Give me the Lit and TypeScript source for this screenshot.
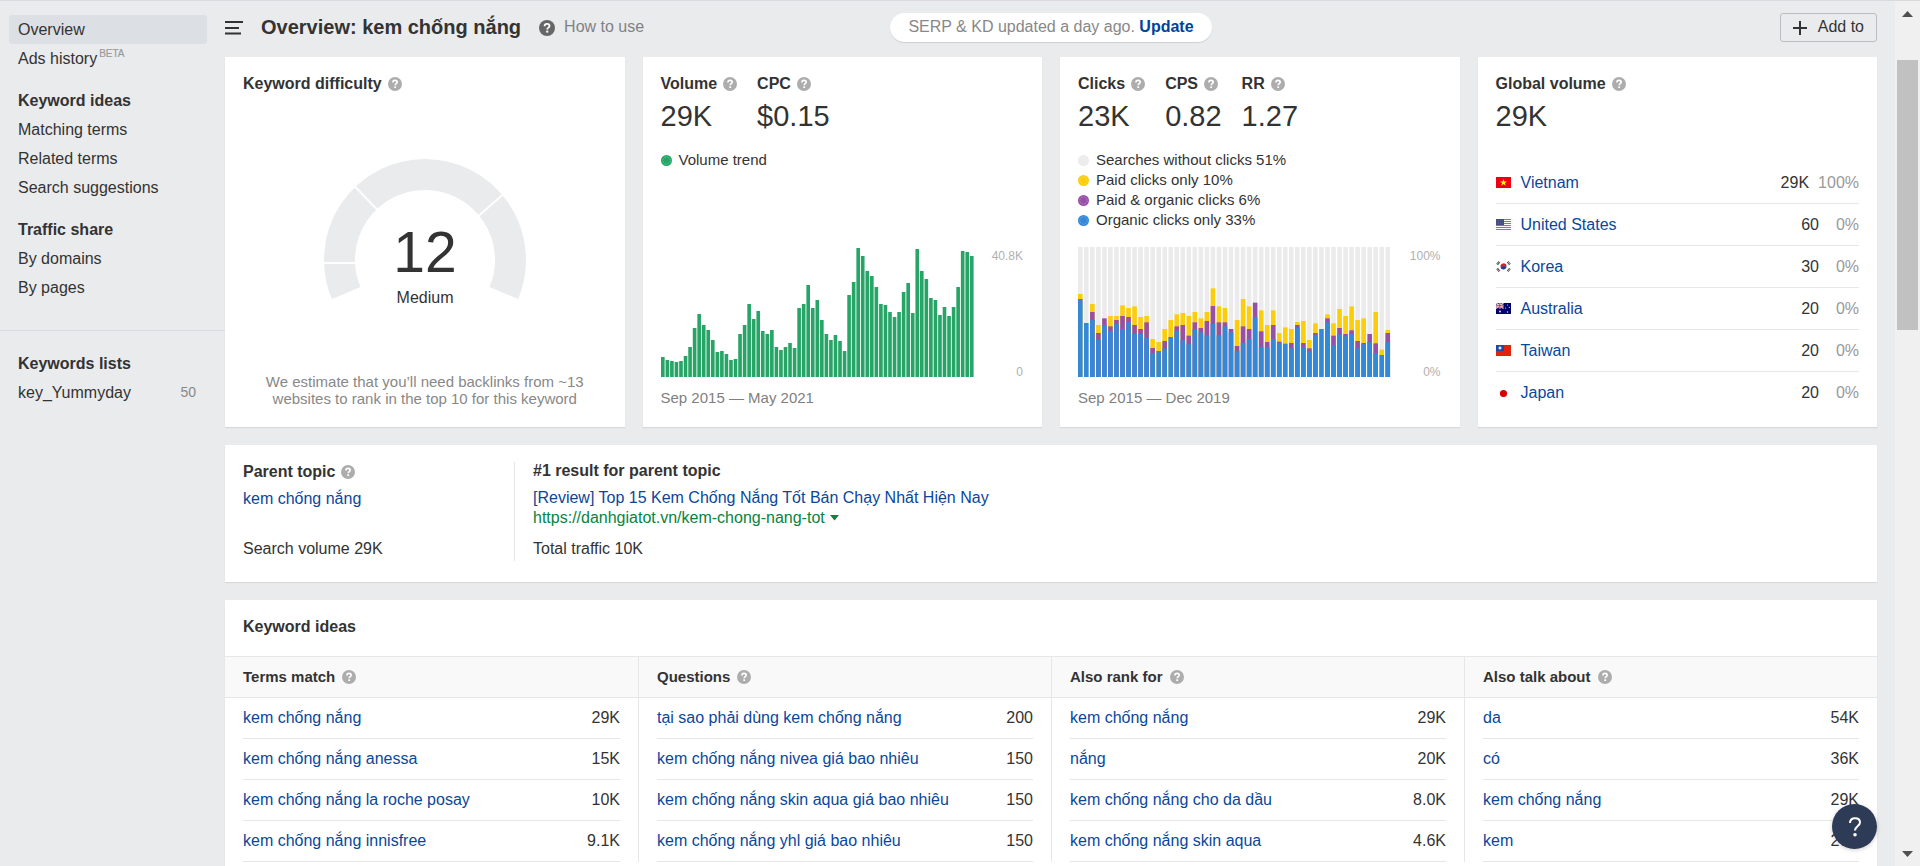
import { LitElement, html, svg, css, nothing } from "lit";
import { customElement, property } from "lit/decorators.js";

type Row = [string, string];

const VOLUME_TREND = [
  20, 17, 16, 15, 16, 21, 30, 49, 63, 52, 47, 37, 25, 26, 23, 17, 18, 43, 52, 73, 58, 66, 46, 43, 47, 30, 27, 30, 34, 29,
  69, 73, 92, 69, 77, 57, 43, 37, 42, 36, 26, 82, 95, 129, 121, 106, 101, 90, 73, 72, 65, 60, 65, 85, 94, 64, 128, 106,
  98, 79, 77, 62, 70, 61, 70, 90, 126, 125, 121,
];
const VOLUME_MAX = 130;

// Cumulative levels per month, out of 390: organic, + paid & organic, + paid.
const CLICK_LEVELS = [
  [234, 234, 249], [162, 162, 162], [171, 195, 219], [111, 132, 156], [156, 176, 176], [137, 152, 183],
  [159, 171, 183], [144, 183, 215], [164, 180, 207], [129, 156, 212], [129, 144, 180], [117, 164, 183],
  [71, 87, 114], [78, 78, 105], [86, 108, 144], [120, 120, 171], [138, 152, 188], [110, 156, 192],
  [98, 124, 183], [144, 164, 195], [134, 147, 176], [125, 168, 195], [159, 213, 266], [125, 164, 212],
  [152, 164, 207], [134, 144, 144], [78, 93, 171], [102, 152, 234], [114, 144, 212], [179, 223, 223],
  [90, 137, 200], [89, 105, 156], [114, 156, 200], [102, 106, 132], [100, 100, 149], [86, 102, 144],
  [147, 156, 165], [89, 102, 168], [78, 86, 111], [125, 132, 161], [144, 144, 144], [164, 176, 188],
  [95, 124, 161], [129, 147, 204], [122, 129, 183], [129, 140, 212], [86, 108, 171], [98, 102, 176],
  [105, 129, 129], [71, 101, 195], [66, 66, 82], [105, 132, 141],
];
const CLICK_MAX = 390;

const COUNTRIES: [string, string, string, string][] = [
  ["vn", "Vietnam", "29K", "100%"],
  ["us", "United States", "60", "0%"],
  ["kr", "Korea", "30", "0%"],
  ["au", "Australia", "20", "0%"],
  ["tw", "Taiwan", "20", "0%"],
  ["jp", "Japan", "20", "0%"],
];

const IDEAS: { title: string; rows: Row[] }[] = [
  { title: "Terms match", rows: [["kem chống nắng", "29K"], ["kem chống nắng anessa", "15K"], ["kem chống nắng la roche posay", "10K"], ["kem chống nắng innisfree", "9.1K"]] },
  { title: "Questions", rows: [["tại sao phải dùng kem chống nắng", "200"], ["kem chống nắng nivea giá bao nhiêu", "150"], ["kem chống nắng skin aqua giá bao nhiêu", "150"], ["kem chống nắng yhl giá bao nhiêu", "150"]] },
  { title: "Also rank for", rows: [["kem chống nắng", "29K"], ["nắng", "20K"], ["kem chống nắng cho da dầu", "8.0K"], ["kem chống nắng skin aqua", "4.6K"]] },
  { title: "Also talk about", rows: [["da", "54K"], ["có", "36K"], ["kem chống nắng", "29K"], ["kem", "27K"]] },
];

const FLAGS: Record<string, unknown> = {
  vn: svg`<rect width="15" height="11" fill="#ec0015"/><path fill="#ff0" d="M7.5 2l.85 2.5H11L8.9 6.1l.8 2.6-2.2-1.6-2.2 1.6.8-2.6L4 4.500h2.650z"/>`,
  us: svg`<rect width="15" height="11" fill="#fff"/><path stroke="#c8606c" stroke-width="1" d="M0 .5h15M0 2.500h15M0 4.500h15M0 6.500h15M0 8.500h15M0 10.500h15"/><rect width="8" height="6" fill="#3c4a7c"/><path stroke="#8d96b8" stroke-width=".6" stroke-dasharray=".7 1" d="M.7 1.200h7M.7 3h7M.7 4.800h7"/>`,
  kr: svg`<rect width="15" height="11" fill="#fff"/><path fill="#d3202f" d="M4.500 5.700a3 3 0 0 1 6 -.6L7.500 6z"/><path fill="#1d3f8f" d="M4.500 5.700a3 3 0 0 0 6 -.6L7.500 5.500z"/><path stroke="#444" stroke-width="2.400" stroke-dasharray=".9 .4" d="M1.200 3.500l2.200-2.600M11.600 .9l2.200 2.600M1.200 7.500l2.200 2.600M11.600 10.100l2.200-2.600"/>`,
  au: svg`<rect width="15" height="11" fill="#00006c"/><path stroke="#e8b6c0" stroke-width="1.500" d="M0 0l7.500 5.500M7.500 0L0 5.500"/><path stroke="#fff" stroke-width="1.800" d="M3.750 0v5.500M0 2.750h7.500"/><path stroke="#d8203a" stroke-width="1" d="M3.750 0v5.500M0 2.750h7.500"/><g fill="#dfe0f0"><circle cx="4" cy="8.500" r="1"/><circle cx="11.500" cy="2" r=".6"/><circle cx="9.500" cy="5" r=".6"/><circle cx="13.300" cy="4.300" r=".6"/><circle cx="11.500" cy="9" r=".7"/></g>`,
  tw: svg`<rect width="15" height="11" fill="#e0230f"/><rect width="8" height="6" fill="#1c4aa8"/><circle cx="4" cy="3" r="1.700" fill="#8fb0e0"/><circle cx="4" cy="3" r="1" fill="#fff"/>`,
  jp: svg`<rect width="15" height="11" fill="#fff"/><circle cx="7.500" cy="5.500" r="3.600" fill="#d80000"/>`,
};

@customElement("help-hint")
class HelpHint extends LitElement {
  @property() label = "";
  static styles = css`
    :host { display: inline-flex; flex: none; }
    button { display: flex; width: var(--hint-size, 14px); height: var(--hint-size, 14px); padding: 0; border: 0; background: none; color: inherit; cursor: pointer; }
    svg { width: 100%; height: 100%; }
  `;
  render() {
    return html`<button aria-label="Help: ${this.label}">
      <svg viewBox="0 0 14 14" aria-hidden="true">
        <circle cx="7" cy="7" r="7" fill="currentColor"/>
        <path d="M4.900 5.500C4.900 4.100 5.800 3.400 7 3.400s2.200.8 2.200 1.900C9.200 6.700 7.200 6.700 7.200 8.300" fill="none" stroke="#fff" stroke-width="1.600"/>
        <rect x="6.300" y="9.300" width="1.800" height="1.700" fill="#fff"/>
      </svg>
    </button>`;
  }
}

@customElement("app-root")
class AppRoot extends LitElement {
  static styles = css`
    :host {
      display: flex;
      box-sizing: border-box;
      height: 100vh;
      overflow: hidden;
      border-top: 1px solid #d9dadd;
      background: #eaebed;
      color: #333;
      font: 16px/20px "Liberation Sans", Arial, sans-serif;
    }
    * { box-sizing: border-box; }
    a { color: #0a479b; text-decoration: none; }
    h1, h2, h3, p, ul { margin: 0; padding: 0; }
    ul { list-style: none; }
    button { font: inherit; color: inherit; }
    svg { display: block; }
    table { width: 100%; border-collapse: separate; border-spacing: 0; }
    td, th { padding: 0; font-weight: 400; text-align: left; }

    .sidebar { flex: none; width: 225px; padding-top: 14px; line-height: 29px; }
    .sidebar a { color: #333; }
    .group { padding: 0 18px 0 9px; margin-bottom: 13px; }
    .group h2 { padding: 0 9px; font-size: 16px; line-height: 29px; }
    .item { display: flex; justify-content: space-between; padding: 0 9px; border-radius: 3px; }
    .item.active { background: #dcdfe4; }
    .beta { margin-left: 2px; font-size: 10px; line-height: 10px; color: #9b9b9b; -webkit-text-stroke: 0.2px; vertical-align: 7px; }
    .count { padding-right: 2px; font-size: 14px; color: #888; }
    .lists { margin-top: 28px; padding-top: 18px; border-top: 1px solid #d9dce0; }

    .main { flex: 1; min-width: 0; padding-right: 18px; }
    .header { display: grid; grid-template-columns: 1fr auto 1fr; align-items: center; height: 56px; padding-bottom: 3px; }
    .title-row { display: flex; align-items: center; }
    .menu { padding: 0; border: 0; background: none; margin-right: 18px; }
    h1 { padding-bottom: 2px; font-size: 20px; line-height: 26px; }
    .howto { display: flex; align-items: center; gap: 9px; margin-left: 18px; --hint-size: 16px; }
    .howto a { padding-bottom: 2px; color: #808285; }
    .howto help-hint { color: #666; }
    .pill { padding: 0 18px 2px; border-radius: 15px; background: #fff; box-shadow: 0 1px 1px rgba(0, 0, 0, 0.12); line-height: 27px; color: #888; }
    .pill button { padding: 0; border: 0; background: none; font-weight: 700; color: #00439b; }
    .add { justify-self: end; display: flex; align-items: center; gap: 11px; height: 29px; padding: 0 12px; border: 1px solid #bbbdc0; border-radius: 3px; background: none; }
    .add span { padding-bottom: 2px; }

    .cards { display: grid; grid-template-columns: repeat(4, minmax(0, 1fr)); gap: 18px; }
    .panel { background: #fff; box-shadow: 0 1px 1px rgba(0, 0, 0, 0.08); }
    .card { display: flex; flex-direction: column; padding: 18px 18px 20px; }
    .card.geo { padding-bottom: 13px; }
    .metrics { display: flex; gap: 20px; }
    .label { display: flex; align-items: center; gap: 6px; font-size: 16px; line-height: 18px; font-weight: 700; white-space: nowrap; }
    help-hint { color: #adadad; }
    .big { margin-top: 6px; font-size: 29px; line-height: 35px; }

    .gauge { align-self: center; margin: auto 0; width: 202px; overflow: visible; }
    .gauge text { fill: #333; text-anchor: middle; }
    .score { font-size: 57px; }
    .grade { font-size: 16px; }
    .estimate { max-width: 330px; margin: 0 auto; text-align: center; font-size: 15px; line-height: 17px; color: #888; }

    .legend { margin-top: 16px; font-size: 15px; }
    .legend li { display: flex; align-items: center; gap: 7px; }
    .plot { display: flex; justify-content: space-between; margin-top: auto; }
    .bars { flex: 1; min-width: 0; height: 130px; }
    .axis { display: flex; flex-direction: column; justify-content: space-between; width: 50px; margin-bottom: -2px; padding: 2px 1px 0 0; text-align: right; font-size: 12px; line-height: 14px; color: #b0b0b0; }
    .dates { margin-top: 12px; font-size: 15px; line-height: 18px; color: #808080; }

    .countries { margin-top: 28px; }
    .countries td, .countries th { height: 42px; border-bottom: 1px solid #e6e7e9; }
    .countries tr:last-child > * { border-bottom: 0; }
    .country { display: flex; align-items: center; gap: 10px; }
    .figures { display: flex; justify-content: flex-end; gap: 9px; }
    .share { min-width: 31px; text-align: right; color: #999; }

    .parent { display: flex; margin-top: 18px; padding: 17px 18px 21px; }
    .topic { display: flex; flex-direction: column; width: 272px; border-right: 1px solid #e6e7e9; }
    .topic .label { margin-bottom: 8px; margin-top: 1px; }
    .result { display: flex; flex-direction: column; padding-left: 18px; }
    .result h2 { font-size: 16px; line-height: 18px; margin-bottom: 8px; }
    .total { margin-top: auto; padding-bottom: 2px; }
    .url { display: flex; align-items: center; gap: 5px; margin-bottom: 11px; color: #078440; }

    .ideas { margin-top: 18px; padding-bottom: 18px; }
    .ideas > h2 { padding: 17px 18px 19px; font-size: 16px; line-height: 20px; border-bottom: 1px solid #e6e7e9; }
    .columns { display: grid; grid-template-columns: repeat(4, minmax(0, 1fr)); }
    .column + .column { border-left: 1px solid #e6e7e9; }
    .column h3 { display: flex; align-items: center; gap: 7px; height: 41px; padding: 0 18px; background: #f9f9f9; border-bottom: 1px solid #e6e7e9; font-size: 15px; }
    .body { padding: 0 18px; }
    .body td, .body th { height: 41px; border-bottom: 1px solid #e6e7e9; }
    .body td { text-align: right; }

    .support { position: fixed; right: 43px; bottom: 17px; display: grid; place-items: center; width: 45px; height: 45px; padding: 0; border: 0; border-radius: 50%; background: #2e3b56; color: #fff; box-shadow: 0 1px 4px rgba(0, 0, 0, 0.2); }

    .scrollbar { flex: none; display: flex; flex-direction: column; align-items: center; width: 25px; padding: 10px 0 9px; background: #f0f0f0; }
    .track { flex: 1; align-self: stretch; display: flex; flex-direction: column; padding: 0 2px; }
    .before { flex: 43; }
    .thumb { flex: 270; background: #c1c1c1; }
    .after { flex: 520; }
  `;

  private label(text: string) {
    return html`<span class="label">${text}<help-hint label=${text}></help-hint></span>`;
  }

  private metric(name: string, value: string) {
    return html`<div>${this.label(name)}<p class="big">${value}</p></div>`;
  }

  private legend(items: [string, string][]) {
    return html`<ul class="legend">
      ${items.map(
        ([color, text]) => html`<li>
          <svg width="11" height="11" viewBox="0 0 11 11" aria-hidden="true">
            <circle cx="5.500" cy="5.500" r="5.500" fill=${color}/>
            <circle cx="5.500" cy="5.500" r="3.700" fill="none" stroke="#fff" stroke-opacity=".35" stroke-width=".7" stroke-dasharray="1.900 1"/>
          </svg>
          <span>${text}</span>
        </li>`
      )}
    </ul>`;
  }

  private volumeBars() {
    const n = VOLUME_TREND.length;
    return html`<svg class="bars" viewBox="0 0 ${n} ${VOLUME_MAX}" preserveAspectRatio="none" role="img" aria-label="Volume trend">
      ${VOLUME_TREND.map((v, i) => svg`<rect x=${i} y=${VOLUME_MAX - v} width="0.8" height=${v} fill="#27a567"/>`)}
    </svg>`;
  }

  private clickBars() {
    const n = CLICK_LEVELS.length;
    const bar = (i: number, level: number, fill: string) =>
      svg`<rect x=${i} y=${CLICK_MAX - level} width="0.76" height=${level} fill=${fill}/>`;
    return html`<svg class="bars" viewBox="0 0 ${n} ${CLICK_MAX}" preserveAspectRatio="none" role="img" aria-label="Clicks by type">
      ${CLICK_LEVELS.map(([organic, both, paid], i) => svg`
        ${bar(i, CLICK_MAX, "#ebebeb")}
        ${paid > both ? bar(i, paid, "#fccd0c") : nothing}
        ${both > organic ? bar(i, both, "#984fa6") : nothing}
        ${bar(i, organic, "#3388d8")}`)}
    </svg>`;
  }

  render() {
    return html`
      <nav class="sidebar" aria-label="Sections">
        <div class="group">
          <a class="item active" href="#overview">Overview</a>
          <a class="item" href="#ads"><span>Ads history<span class="beta">BETA</span></span></a>
        </div>
        <div class="group">
          <h2>Keyword ideas</h2>
          <a class="item" href="#matching">Matching terms</a>
          <a class="item" href="#related">Related terms</a>
          <a class="item" href="#suggestions">Search suggestions</a>
        </div>
        <div class="group">
          <h2>Traffic share</h2>
          <a class="item" href="#domains">By domains</a>
          <a class="item" href="#pages">By pages</a>
        </div>
        <div class="lists">
          <div class="group">
            <h2>Keywords lists</h2>
            <a class="item" href="#list">key_Yummyday<span class="count">50</span></a>
          </div>
        </div>
      </nav>

      <main class="main">
        <header class="header">
          <div class="title-row">
            <button class="menu" aria-label="Toggle menu">
              <svg width="18" height="14" viewBox="0 0 18 14"><path d="M0 1h18M0 7h14M0 12.500h16" stroke="#333" stroke-width="2"/></svg>
            </button>
            <h1>Overview: kem chống nắng</h1>
            <div class="howto"><help-hint label="How to use"></help-hint><a href="#help">How to use</a></div>
          </div>
          <div class="pill">SERP &amp; KD updated a day ago. <button>Update</button></div>
          <button class="add">
            <svg width="14" height="14" viewBox="0 0 14 14"><path d="M7 0v14M0 7h14" stroke="#333" stroke-width="2"/></svg>
            <span>Add to</span>
          </button>
        </header>

        <div class="cards">
          <section class="panel card">
            ${this.label("Keyword difficulty")}
            <svg class="gauge" viewBox="0 0 202 148" role="img" aria-label="Keyword difficulty 12, Medium">
              <path d="M22.200 134.100A85.500 85.500 0 1 1 179.800 134.100" fill="none" stroke="#eaebed" stroke-width="31"/>
              <path d="M0 104h32M30 26.500L54 51.500M180 34.500L154 57.500" stroke="#fff" stroke-width="2"/>
              <text class="score" x="101" y="113">12</text>
              <text class="grade" x="101" y="144">Medium</text>
            </svg>
            <p class="estimate">We estimate that you’ll need backlinks from ~13 websites to rank in the top 10 for this keyword</p>
          </section>

          <section class="panel card">
            <div class="metrics">${this.metric("Volume", "29K")}${this.metric("CPC", "$0.15")}</div>
            ${this.legend([["#27a567", "Volume trend"]])}
            <div class="plot">${this.volumeBars()}<div class="axis"><span>40.8K</span><span>0</span></div></div>
            <p class="dates">Sep 2015 — May 2021</p>
          </section>

          <section class="panel card">
            <div class="metrics">${this.metric("Clicks", "23K")}${this.metric("CPS", "0.82")}${this.metric("RR", "1.27")}</div>
            ${this.legend([
              ["#ebebeb", "Searches without clicks 51%"],
              ["#fccd0c", "Paid clicks only 10%"],
              ["#984fa6", "Paid & organic clicks 6%"],
              ["#3388d8", "Organic clicks only 33%"],
            ])}
            <div class="plot">${this.clickBars()}<div class="axis"><span>100%</span><span>0%</span></div></div>
            <p class="dates">Sep 2015 — Dec 2019</p>
          </section>

          <section class="panel card geo">
            ${this.metric("Global volume", "29K")}
            <table class="countries" aria-label="Global volume">
              ${COUNTRIES.map(
                ([code, name, value, share]) => html`<tr>
                  <th scope="row"><div class="country"><svg width="15" height="11" viewBox="0 0 15 11" aria-hidden="true">${FLAGS[code]}</svg><a href="#${code}">${name}</a></div></th>
                  <td><div class="figures"><span>${value}</span><span class="share">${share}</span></div></td>
                </tr>`
              )}
            </table>
          </section>
        </div>

        <section class="panel parent">
          <div class="topic">
            ${this.label("Parent topic")}
            <a href="#topic">kem chống nắng</a>
            <p class="total">Search volume 29K</p>
          </div>
          <div class="result">
            <h2>#1 result for parent topic</h2>
            <a href="#result">[Review] Top 15 Kem Chống Nắng Tốt Bán Chạy Nhất Hiện Nay</a>
            <a class="url" href="#url">https://danhgiatot.vn/kem-chong-nang-tot
              <svg width="9" height="6" viewBox="0 0 9 6" aria-hidden="true"><path d="M0 0h9L4.500 5.500z" fill="currentColor"/></svg></a>
            <p class="total">Total traffic 10K</p>
          </div>
        </section>

        <section class="panel ideas">
          <h2>Keyword ideas</h2>
          <div class="columns">
            ${IDEAS.map(
              ({ title, rows }) => html`<div class="column">
                <h3>${title}<help-hint label=${title}></help-hint></h3>
                <div class="body">
                  <table aria-label=${title}>
                    ${rows.map(([term, value]) => html`<tr><th scope="row"><a href="#term">${term}</a></th><td>${value}</td></tr>`)}
                  </table>
                </div>
              </div>`
            )}
          </div>
        </section>
      </main>

      <div class="scrollbar" aria-hidden="true">
        <svg width="11" height="6" viewBox="0 0 11 6"><path d="M0 6h11L5.500 0z" fill="#505050"/></svg>
        <div class="track"><div class="before"></div><div class="thumb"></div><div class="after"></div></div>
        <svg width="11" height="6" viewBox="0 0 11 6"><path d="M0 0h11L5.500 6z" fill="#505050"/></svg>
      </div>

      <button class="support" aria-label="Support">
        <svg width="14" height="20" viewBox="0 0 14 20"><path d="M2 6C2 3 4 1.200 7 1.200S12 3 12 5.600C12 9 7 9 7 13.500" fill="none" stroke="#fff" stroke-width="2"/><circle cx="7" cy="17.800" r="1.800" fill="#fff"/></svg>
      </button>
    `;
  }
}
